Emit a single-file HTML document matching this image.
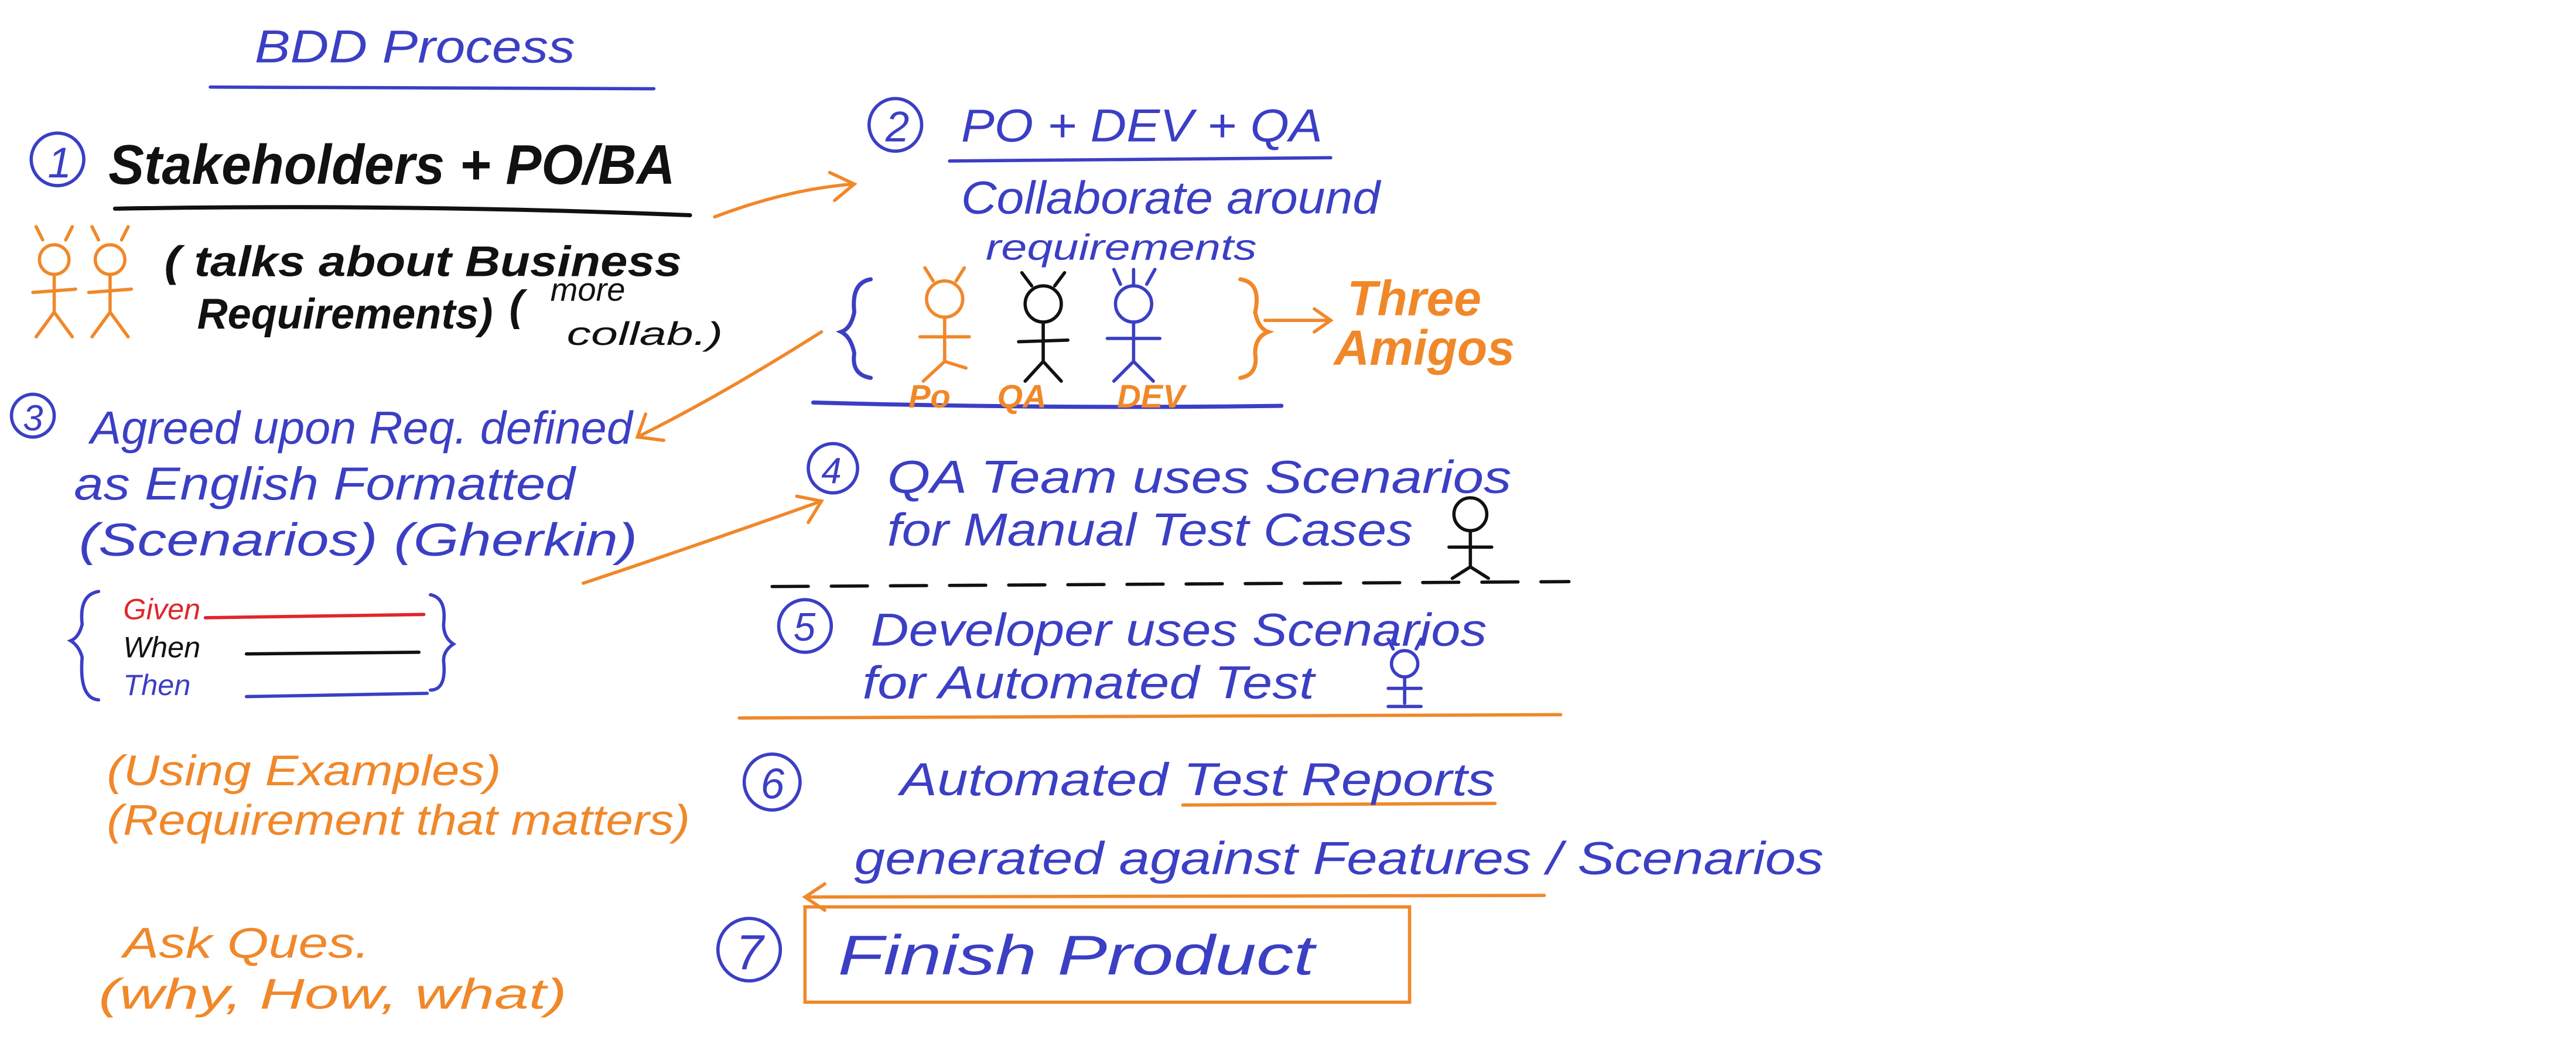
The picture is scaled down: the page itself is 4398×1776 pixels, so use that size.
<!DOCTYPE html>
<html><head><meta charset="utf-8"><style>
html,body{margin:0;padding:0;background:#fff;}
svg{display:block}
text{font-family:"Liberation Sans",sans-serif;font-style:italic;}
.b{fill:#3b3fc4}.o{fill:#f0882a}.k{fill:#111}.r{fill:#e0262a}
</style></head><body>
<svg width="4398" height="1776" viewBox="0 0 1568 633" preserveAspectRatio="none" xmlns="http://www.w3.org/2000/svg">
<g fill="none" stroke-linecap="round" stroke-width="2">
<path d="M128 53 L398 54" stroke="#3b3fc4"/>
<path d="M70 127 Q250 124 420 131" stroke="#111" stroke-width="2.5"/>
<path d="M578 98 L810 96" stroke="#3b3fc4"/>
<path d="M495 245 Q640 249 780 247" stroke="#3b3fc4" stroke-width="2.5"/>
<path d="M470 357 L955 354" stroke="#111" stroke-dasharray="22 14"/>
<path d="M450 437 L950 435" stroke="#f0882a"/>
<path d="M720 490 L910 489" stroke="#f0882a"/>
<circle cx="35" cy="97" r="16" stroke="#3b3fc4"/>
<circle cx="545" cy="76" r="16" stroke="#3b3fc4"/>
<circle cx="20" cy="253" r="13" stroke="#3b3fc4"/>
<circle cx="507" cy="285" r="15" stroke="#3b3fc4"/>
<circle cx="490" cy="381" r="16" stroke="#3b3fc4"/>
<circle cx="470" cy="476" r="17" stroke="#3b3fc4"/>
<circle cx="456" cy="578" r="19" stroke="#3b3fc4"/>
<path d="M435 132 Q480 115 520 112 M505 105 L520 112 L508 122" stroke="#f0882a"/>
<path d="M500 202 Q440 240 390 265 M393 252 L388 266 L404 268" stroke="#f0882a"/>
<path d="M355 355 Q430 330 500 305 M485 302 L500 305 L492 318" stroke="#f0882a"/>
<path d="M770 195 L810 195 M800 188 L810 195 L800 202" stroke="#f0882a"/>
<path d="M940 545 L490 546 M502 538 L490 546 L502 554" stroke="#f0882a"/>
<rect x="490" y="552" width="368" height="58" stroke="#f0882a"/>
<path d="M530 170 Q518 172 520 190 Q518 200 512 202 Q518 205 520 215 Q518 228 530 230" stroke="#3b3fc4" stroke-width="2.5"/>
<path d="M755 170 Q768 172 764 190 Q766 200 772 202 Q764 205 764 215 Q766 228 755 230" stroke="#f0882a" stroke-width="2.5"/>
<path d="M60 360 Q48 362 50 380 Q48 388 43 390 Q48 393 50 400 Q48 425 60 426" stroke="#3b3fc4"/>
<path d="M262 362 Q272 364 270 380 Q270 388 276 392 Q270 396 270 402 Q272 420 262 420" stroke="#3b3fc4"/>
<path d="M125 376 L258 374" stroke="#e0262a"/>
<path d="M150 398 L255 397" stroke="#111"/>
<path d="M150 424 L260 422" stroke="#3b3fc4"/>
<g stroke="#f0882a"><circle cx="33" cy="158" r="9"/><path d="M33 167 L33 190 M20 178 L46 176 M33 190 L22 205 M33 190 L44 205 M26 146 L22 138 M40 146 L44 138"/></g>
<g stroke="#f0882a"><circle cx="67" cy="158" r="9"/><path d="M67 167 L67 190 M54 178 L80 176 M67 190 L56 205 M67 190 L78 205 M60 146 L56 138 M74 146 L78 138"/></g>
<g stroke="#f0882a"><circle cx="575" cy="182" r="11"/><path d="M575 193 L575 220 M560 205 L590 205 M575 220 L562 232 M575 220 L588 224 M568 171 L563 163 M582 171 L587 163"/></g>
<g stroke="#111"><circle cx="635" cy="185" r="11"/><path d="M635 196 L635 220 M620 208 L650 207 M635 220 L624 232 M635 220 L646 232 M628 174 L622 166 M642 174 L648 166"/></g>
<g stroke="#3b3fc4"><circle cx="690" cy="185" r="11"/><path d="M690 196 L690 220 M674 206 L706 206 M690 220 L678 232 M690 220 L702 232 M682 173 L678 164 M690 173 L690 164 M698 173 L703 164"/></g>
<g stroke="#111"><circle cx="895" cy="313" r="10"/><path d="M895 323 L895 345 M882 333 L908 333 M895 345 L884 352 M895 345 L906 352"/></g>
<g stroke="#3b3fc4"><circle cx="855" cy="404" r="8"/><path d="M855 412 L855 428 M845 419 L865 419 M845 430 L865 430 M848 395 L845 389 M862 395 L865 389"/></g>
</g>
<text x="155" y="38" font-size="28" class="b" textLength="195" lengthAdjust="spacingAndGlyphs">BDD Process</text>
<text x="29" y="108" font-size="26" class="b">1</text>
<text x="66" y="112" font-size="34" class="k" font-weight="bold" textLength="345" lengthAdjust="spacingAndGlyphs">Stakeholders + PO/BA</text>
<text x="100" y="168" font-size="26" class="k" font-weight="bold" textLength="315" lengthAdjust="spacingAndGlyphs">( talks about Business</text>
<text x="120" y="200" font-size="26" class="k" font-weight="bold" textLength="180" lengthAdjust="spacingAndGlyphs">Requirements)</text>
<text x="310" y="195" font-size="26" class="k" font-weight="bold">(</text>
<text x="335" y="183" font-size="20" class="k">more</text>
<text x="345" y="210" font-size="20" class="k" textLength="95" lengthAdjust="spacingAndGlyphs">collab.)</text>
<text x="539" y="86" font-size="26" class="b">2</text>
<text x="585" y="86" font-size="28" class="b" textLength="220" lengthAdjust="spacingAndGlyphs">PO + DEV + QA</text>
<text x="585" y="130" font-size="28" class="b" textLength="255" lengthAdjust="spacingAndGlyphs">Collaborate around</text>
<text x="600" y="158" font-size="22" class="b" textLength="165" lengthAdjust="spacingAndGlyphs">requirements</text>
<text x="820" y="192" font-size="30" class="o" font-weight="bold">Three</text>
<text x="812" y="222" font-size="30" class="o" font-weight="bold">Amigos</text>
<text x="553" y="248" font-size="20" class="o" font-weight="bold">Po</text>
<text x="607" y="248" font-size="20" class="o" font-weight="bold">QA</text>
<text x="680" y="248" font-size="20" class="o" font-weight="bold">DEV</text>
<text x="14" y="262" font-size="22" class="b">3</text>
<text x="55" y="270" font-size="28" class="b" textLength="330" lengthAdjust="spacingAndGlyphs">Agreed upon Req. defined</text>
<text x="45" y="304" font-size="28" class="b" textLength="305" lengthAdjust="spacingAndGlyphs">as English Formatted</text>
<text x="48" y="338" font-size="28" class="b" textLength="340" lengthAdjust="spacingAndGlyphs">(Scenarios) (Gherkin)</text>
<text x="75" y="377" font-size="18" class="r">Given</text>
<text x="75" y="400" font-size="18" class="k">When</text>
<text x="75" y="423" font-size="18" class="b">Then</text>
<text x="65" y="478" font-size="26" class="o" textLength="240" lengthAdjust="spacingAndGlyphs">(Using Examples)</text>
<text x="65" y="508" font-size="26" class="o" textLength="355" lengthAdjust="spacingAndGlyphs">(Requirement that matters)</text>
<text x="75" y="583" font-size="26" class="o" textLength="150" lengthAdjust="spacingAndGlyphs">Ask Ques.</text>
<text x="60" y="614" font-size="26" class="o" textLength="285" lengthAdjust="spacingAndGlyphs">(why, How, what)</text>
<text x="500" y="294" font-size="22" class="b">4</text>
<text x="540" y="300" font-size="28" class="b" textLength="380" lengthAdjust="spacingAndGlyphs">QA Team uses Scenarios</text>
<text x="540" y="332" font-size="28" class="b" textLength="320" lengthAdjust="spacingAndGlyphs">for Manual Test Cases</text>
<text x="483" y="390" font-size="24" class="b">5</text>
<text x="530" y="393" font-size="28" class="b" textLength="375" lengthAdjust="spacingAndGlyphs">Developer uses Scenarios</text>
<text x="525" y="425" font-size="28" class="b" textLength="275" lengthAdjust="spacingAndGlyphs">for Automated Test</text>
<text x="463" y="486" font-size="26" class="b">6</text>
<text x="548" y="484" font-size="28" class="b" textLength="362" lengthAdjust="spacingAndGlyphs">Automated Test Reports</text>
<text x="520" y="532" font-size="28" class="b" textLength="590" lengthAdjust="spacingAndGlyphs">generated against Features / Scenarios</text>
<text x="448" y="590" font-size="30" class="b">7</text>
<text x="510" y="593" font-size="34" class="b" textLength="290" lengthAdjust="spacingAndGlyphs">Finish Product</text>
</svg>
</body></html>
